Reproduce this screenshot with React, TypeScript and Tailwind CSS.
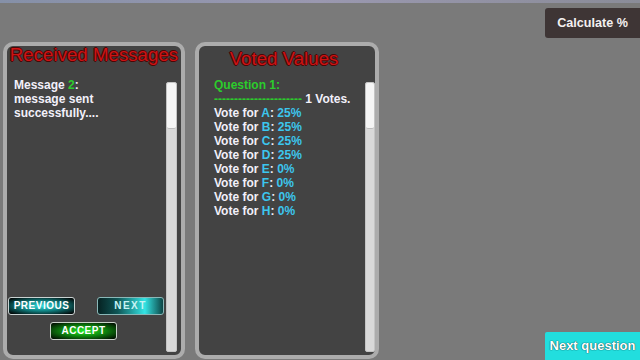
const sans = "font-['Liberation_Sans',Arial,sans-serif]"

const titleShadow =
  "[text-shadow:-1px_0_0_#4a0606,1px_0_0_#4a0606,0_-1px_0_#4a0606,0_1px_0_#4a0606]"

function Scrollbar({ className }: { className: string }) {
  return (
    <div
      className={`flex flex-col rounded-[2px] border border-[#c4c4c4] bg-[#d9d9d9] ${className}`}
    >
      <div className="h-[46px] rounded-[2px] border-b border-[#bdbdbd] bg-[#f5f5f5]" />
    </div>
  )
}

const votes = [
  ["A", "25%"],
  ["B", "25%"],
  ["C", "25%"],
  ["D", "25%"],
  ["E", "0%"],
  ["F", "0%"],
  ["G", "0%"],
  ["H", "0%"],
]

export default function App() {
  return (
    <div
      className={`flex h-[360px] w-[640px] flex-col overflow-hidden bg-[#7a7a7a] ${sans}`}
    >
      <div className="h-[3px] bg-gradient-to-r from-[#8590a8] via-[#9a98b0] to-[#8a8c98]" />
      <div className="flex h-[357px]">
        <div className="flex gap-[10px] pl-[3px] pt-[39px] pb-[1px]">
          {/* received messages */}
          <div className="flex w-[182px] flex-col rounded-[10px] border-4 border-[#acacac] bg-[#434343]">
            <div
              className={`-mt-[2px] mb-[12px] text-center text-[18.7px] leading-[22px] text-[#cc1414] ${titleShadow}`}
            >
              Received Messages
            </div>
            <div className="flex flex-1">
              <div className="flex flex-1 flex-col pl-[7px] text-[12px] font-bold leading-[14px] text-[#f2f0fa]">
                <div>
                  Message <span className="text-[#2ccc2c]">2</span>:
                </div>
                <div>message sent</div>
                <div>successfully....</div>
                <div className="-ml-[6px] mt-auto mb-[15px] flex flex-col gap-[7px] pr-[2px]">
                  <div className="flex justify-between">
                    <button className="flex h-[18px] w-[67px] items-center justify-center rounded-[3px] border-[1.5px] border-[#c9d2d2] bg-[radial-gradient(ellipse_at_center,#34e0e0_0%,#108080_45%,#020a0a_92%)] text-[10px] font-bold tracking-[0.5px] text-white">
                      PREVIOUS
                    </button>
                    <button className="flex h-[18px] w-[67px] items-center justify-center rounded-[3px] border-[1.5px] border-[#8ab8b8] bg-[linear-gradient(90deg,#062222_0%,#0f5656_30%,#34e4e4_72%,#0c4444_100%)] text-[10px] font-bold tracking-[1.5px] text-[#c8f4f4]">
                      NEXT
                    </button>
                  </div>
                  <div className="flex pl-[42px]">
                    <button className="flex h-[18px] w-[67px] items-center justify-center rounded-[3px] border-[1.5px] border-[#c9d2c9] bg-[radial-gradient(ellipse_at_center,#22ee22_0%,#0e8a0e_45%,#021402_92%)] text-[10px] font-bold tracking-[0.5px] text-white">
                      ACCEPT
                    </button>
                  </div>
                </div>
              </div>
              <Scrollbar className="mt-[4px] mb-[3px] mr-[4px] w-[11px]" />
            </div>
          </div>

          {/* voted values */}
          <div className="flex w-[184px] flex-col rounded-[10px] border-4 border-[#acacac] bg-[#434343]">
            <div
              className={`mt-[2px] mb-[8px] pr-[6px] text-center text-[18.7px] leading-[22px] text-[#cc1414] ${titleShadow}`}
            >
              Voted Values
            </div>
            <div className="flex flex-1">
              <div className="flex-1 pl-[15px] text-[12px] font-bold leading-[14px] text-[#f2f0fa]">
                <div className="text-[#2ccc2c]">Question 1:</div>
                <div>
                  <span className="text-[#2ccc2c]">----------------------</span>{" "}
                  1 Votes.
                </div>
                {votes.map(([l, p]) => (
                  <div key={l}>
                    Vote for <span className="text-[#3cc6ee]">{l}</span>:{" "}
                    <span className="text-[#3cc6ee]">{p}</span>
                  </div>
                ))}
              </div>
              <Scrollbar className="mt-[4px] mb-[3px] w-[10px]" />
            </div>
          </div>
        </div>

        <div className="flex flex-1 flex-col items-end justify-between pt-[5px]">
          <button className="flex h-[30px] w-[95px] items-center justify-center rounded-l-[3px] bg-[#3e3535] text-[12.6px] font-bold text-[#f4f0f0]">
            Calculate %
          </button>
          <button className="flex h-[28px] w-[95px] items-center justify-center rounded-tl-[2px] bg-[#22dede] text-[13px] font-bold text-white [text-shadow:0_0_1px_#0a4a4a,0_0_1px_#0a4a4a]">
            Next question
          </button>
        </div>
      </div>
    </div>
  )
}
